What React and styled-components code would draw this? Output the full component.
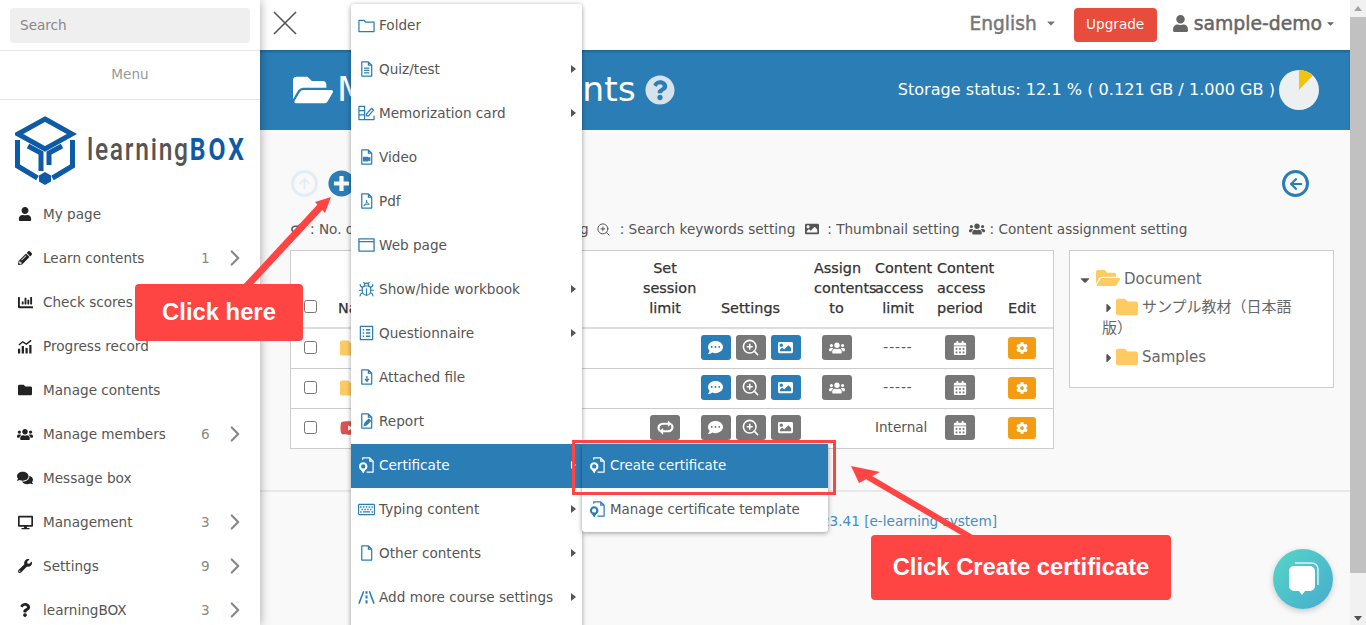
import React from "react";
import styled, { createGlobalStyle } from "styled-components";
import {
  FaUser, FaPencilAlt, FaChartBar, FaFolder, FaUsers, FaComments, FaDesktop, FaWrench, FaQuestion,
  FaFolderOpen, FaQuestionCircle, FaPlusCircle, FaArrowUp, FaArrowLeft, FaCalendarAlt, FaCog,
  FaImage, FaCommentDots, FaRegKeyboard, FaYoutube, FaCaretDown, FaCaretRight,
} from "react-icons/fa";
import { ChevronRight, ZoomIn, Bug } from "lucide-react";

const FONT = `"DejaVu Sans", "Noto Sans CJK JP", sans-serif`;
const BLUE = "#2a7db5";

const GlobalStyle = createGlobalStyle`
  html, body { margin: 0; padding: 0; height: 625px; overflow: hidden; background: #fff; }
  * { box-sizing: border-box; }
  body { font-family: ${FONT}; font-size: 13.6px; color: #555; }
`;

const Page = styled.div`
  position: relative;
  display: flex;
  width: 1366px;
  height: 625px;
  overflow: hidden;
`;

/* ---- sidebar ---- */
const Sidebar = styled.aside`
  width: 260px;
  flex: none;
  background: #fff;
  box-shadow: 0 0 10px rgba(0, 0, 0, 0.35);
  position: relative;
  z-index: 2;
  overflow: hidden;
`;
const SearchWrap = styled.div`
  height: 51px;
  padding: 8px 10px 0;
  border-bottom: 1px solid #e6e6e6;
`;
const SearchBox = styled.div`
  height: 35px;
  background: #efefef;
  border-radius: 4px;
  padding: 0 10px;
  line-height: 34px;
  color: #888;
`;
const MenuTitle = styled.div`
  height: 49px;
  line-height: 46px;
  text-align: center;
  color: #999;
  border-bottom: 1px solid #e6e6e6;
`;
const LogoRow = styled.div`
  display: flex;
  align-items: center;
  height: 92px;
  padding: 9px 0 0 15px;
  svg { flex: none; }
`;
const LogoWord = styled.div`
  margin: -4px 0 0 10px;
  font-family: Roboto, sans-serif;
  font-size: 32px;
  font-weight: 500;
  letter-spacing: 2.2px;
  color: #555;
  white-space: nowrap;
  transform: scaleX(0.77);
  transform-origin: left center;
  span { color: #0d5aa7; font-weight: 700; letter-spacing: 4px; }
`;
const NavItem = styled.div`
  display: flex;
  align-items: center;
  height: 44px;
  padding-left: 17px;
  color: #555;
`;
const NavIcon = styled.span`
  display: flex;
  width: 16px;
  margin-right: 10px;
  justify-content: center;
  color: #222;
`;
const NavBadge = styled.span`
  margin-left: auto;
  width: 21px;
  color: #888;
`;
const NavArrow = styled(ChevronRight)`
  margin-right: 12px;
  color: #888;
`;

/* ---- main column ---- */
const Main = styled.main`
  flex: 1;
  min-width: 0;
  background: #f9f9f9;
`;
const TopBar = styled.header`
  display: flex;
  align-items: center;
  height: 50px;
  padding: 0 14px 4px 14px;
  background: #fff;
`;
const CloseIcon = styled.svg`
  width: 24px;
  height: 24px;
  margin-right: auto;
  margin-left: -1px;
  stroke: #555;
  stroke-width: 1.6;
`;
const Lang = styled.span`
  font-size: 18.6px;
  margin-right: 2px;
  color: #777;
  -webkit-text-stroke: 0.5px #777;
`;
const LangCaret = styled(FaCaretDown)`
  margin-left: 6px;
  color: #777;
`;
const Upgrade = styled.span`
  height: 34px;
  line-height: 33px;
  width: 83px;
  margin: 4px 15px 0 17px;
  text-align: center;
  border-radius: 4px;
  background: #e74c3c;
  color: #fff;
`;
const UserName = styled.span`
  font-size: 18.8px;
  color: #666;
  margin-left: 5px;
  -webkit-text-stroke: 0.5px #666;
`;
const UserCaret = styled(FaCaretDown)`
  margin-left: 3px;
  color: #666;
`;
const Banner = styled.section`
  display: flex;
  align-items: center;
  height: 80px;
  padding: 0 31px 0 33px;
  background: ${BLUE};
  box-shadow: inset 0 2px 2px rgba(0, 0, 0, 0.18);
  color: #fff;
`;
const BannerTitle = styled.h1`
  margin: -2px 9px 0 4px;
  font-size: 34.6px;
  font-weight: 400;
  line-height: 1;
  white-space: nowrap;
`;
const Storage = styled.span`
  margin: -2px 4px 0 auto;
  font-size: 16.1px;
  white-space: nowrap;
`;
const Content = styled.div`
  padding: 40px 16px 0 30px;
`;
const ToolRow = styled.div`
  display: flex;
  align-items: center;
  gap: 10px;
  height: 27px;
  padding: 0 25px 0 1px;
`;
const RingIcon = styled.span`
  display: flex;
  align-items: center;
  justify-content: center;
  width: 27px;
  height: 27px;
  margin-left: ${(p) => (p.$push ? "auto" : "0")};
  border: 3px solid ${(p) => p.$color};
  border-radius: 50%;
  color: ${(p) => p.$color};
`;
const Legend = styled.div`
  display: flex;
  align-items: center;
  height: 20px;
  margin: 22px 0 11px;
  color: #555;
  white-space: nowrap;
`;
const LegendEntry = styled.span`
  display: inline-flex;
  align-items: center;
  gap: ${(p) => p.$gap}px;
  margin-right: ${(p) => p.$after}px;
`;
const Panels = styled.div`
  display: flex;
  align-items: flex-start;
  gap: 15px;
`;
const TableBox = styled.div`
  width: 764px;
  flex: none;
  background: #fff;
  border: 1px solid #ccc;
  border-bottom: 0;
`;
const Row = styled.div`
  display: grid;
  grid-template-columns: 39px 305px 60px 111px 61px 62px 62px 62px;
  height: ${(p) => (p.$head ? "78px" : "40px")};
  border-bottom: ${(p) => (p.$head ? "2px solid #ddd" : "1px solid #ccc")};
`;
const HeadCell = styled.div`
  align-self: end;
  padding: 0 8px 9px;
  text-align: ${(p) => (p.$left ? "left" : "center")};
  font-size: 14.4px;
  line-height: 20px;
  color: #333;
  -webkit-text-stroke: 0.25px #333;
`;
const HeadCheck = styled.div`
  align-self: end;
  display: flex;
  justify-content: center;
  padding-bottom: 14px;
`;
const Cell = styled.div`
  display: flex;
  align-items: center;
  justify-content: ${(p) => (p.$left ? "flex-start" : "center")};
  gap: 5px;
  padding-left: ${(p) => (p.$left ? "10px" : "0")};
  padding-bottom: 2px;
  color: #555;
`;
const LimitText = styled.span`
  width: 46px;
  margin-top: -2px;
  text-align: center;
  white-space: nowrap;
  letter-spacing: ${(p) => (p.$dash ? "1px" : "0")};
`;
const CheckBox = styled.span`
  width: 13px;
  height: 13px;
  border: 1px solid #767676;
  border-radius: 2.5px;
  background: #fff;
`;
const ActionBtn = styled.span`
  display: flex;
  align-items: center;
  justify-content: center;
  width: ${(p) => (p.$edit ? "28px" : "30px")};
  height: ${(p) => (p.$edit ? "22px" : "25px")};
  margin-top: ${(p) => (p.$edit ? "1px" : "0")};
  border-radius: 3px;
  color: #fff;
  background: ${(p) => (p.$edit ? "#f39c12" : p.$blue ? BLUE : "#777")};
`;
const TreeBox = styled.div`
  width: 265px;
  flex: none;
  padding: 15px 30px 19px 8px;
  background: #fff;
  border: 1px solid #ccc;
  font-size: 15px;
  color: #666;
`;
const TreeRow = styled.div`
  line-height: 20px;
  margin-left: ${(p) => (p.$nested ? "24px" : "0")};
  margin-top: ${(p) => p.$gap || 0}px;
  svg { vertical-align: -3px; margin-right: 4px; }
  svg:first-child { margin-right: ${(p) => (p.$nested ? "0" : "4px")}; }
  svg:nth-child(2) { vertical-align: -6px; }
`;
const Footer = styled.footer`
  display: flex;
  justify-content: flex-end;
  margin-top: 41px;
  padding: 21px 353px 0 0;
  border-top: 2px solid #e8e8e8;
  color: #3f8fc6;
  line-height: 16px;
`;
const Scrollbar = styled.div`
  width: 16px;
  flex: none;
  background: #f1f1f1;
  display: flex;
  flex-direction: column;
  align-items: center;
`;
const ScrollTop = styled.div`
  height: 17px;
  display: flex;
  align-items: center;
`;
const ScrollThumb = styled.div`
  width: 16px;
  height: 556px;
  margin-bottom: auto;
  background: #c1c1c1;
`;
const ScrollArrow = styled.span`
  width: 0;
  height: 0;
  margin-bottom: ${(p) => (p.$up ? "0" : "4px")};
  border-left: 4px solid transparent;
  border-right: 4px solid transparent;
  border-top: ${(p) => (p.$up ? "0" : "5px solid #505050")};
  border-bottom: ${(p) => (p.$up ? "5px solid #a3a3a3" : "0")};
`;

/* ---- things lying over the page ---- */
const Dropdown = styled.div`
  position: absolute;
  left: ${(p) => p.$left}px;
  top: ${(p) => p.$top}px;
  width: ${(p) => p.$width}px;
  font-size: ${(p) => p.$size || 13.6}px;
  background: #fff;
  border-radius: 3px;
  box-shadow: 0 1px 5px rgba(0, 0, 0, 0.4);
  z-index: 3;
`;
const DropItem = styled.div`
  display: flex;
  align-items: center;
  gap: 4px;
  height: 44px;
  padding: 0 7px 2px;
  white-space: nowrap;
  background: ${(p) => (p.$active ? BLUE : "transparent")};
  color: ${(p) => (p.$active ? "#fff" : "#555")};
  svg { flex: none; color: ${(p) => (p.$active ? "#fff" : BLUE)}; }
`;
const DropCaret = styled.span`
  margin-left: auto;
  margin-right: -1px;
  border-left: 5px solid ${(p) => (p.$active ? "#fff" : "#555")};
  border-top: 4px solid transparent;
  border-bottom: 4px solid transparent;
`;
const Highlight = styled.div`
  position: absolute;
  left: 572px;
  top: 440px;
  width: 264px;
  height: 55px;
  border: 3px solid #f44;
  z-index: 4;
`;
const ArrowLayer = styled.svg`
  position: absolute;
  left: 0;
  top: 0;
  z-index: 4;
  pointer-events: none;
`;
const Callout = styled.div`
  position: absolute;
  left: ${(p) => p.$left}px;
  top: ${(p) => p.$top}px;
  width: ${(p) => p.$width}px;
  height: ${(p) => p.$height}px;
  display: flex;
  align-items: center;
  justify-content: center;
  padding-bottom: 1px;
  border-radius: 4px;
  background: #f44;
  color: #fff;
  font-family: "Liberation Sans", Arial, sans-serif;
  font-weight: 700;
  font-size: 23.8px;
  z-index: 5;
`;
const ChatBubble = styled.div`
  position: absolute;
  left: 1273px;
  top: 549px;
  width: 60px;
  height: 60px;
  display: flex;
  align-items: center;
  justify-content: center;
  border-radius: 50%;
  background: linear-gradient(135deg, #56d6c6, #47abcf);
  box-shadow: 0 2px 6px rgba(0, 0, 0, 0.2);
  z-index: 5;
`;

/* ---- drawn icons ---- */
const MI = ({ children, w = 17 }) => (
  <svg width={w} height={18} viewBox="0 0 18 18" fill="none" stroke="currentColor" strokeWidth="1.3" strokeLinejoin="round">
    {children}
  </svg>
);
const FILE = "M4 1.5h7l3.5 3.5v11.5h-10.5z M11 1.5v3.5h3.5";
const IconFolder = () => <MI><path d="M1 4h5.5l1.5 2h9v10h-16z" /></MI>;
const IconQuiz = () => <MI><path d={FILE} /><path d="M6.5 8h5.5M6.5 10.5h5.5M6.5 13h5.5" /></MI>;
const IconCard = () => (
  <MI>
    <path d="M1 2h6v14h-6zM1 6.5h6M1 11h6M7 16h10v-4" />
    <path d="M9 10l5.5-6 2 2-5.5 6h-2z" />
  </MI>
);
const IconVideo = () => <MI><path d={FILE} /><path d="M6 9.5h4.5v3.5h-4.5zM10.5 11l2-1.2v3l-2-1.2z" fill="currentColor" /></MI>;
const IconPdf = () => <MI><path d={FILE} /><path d="M6 14c2-1 3.5-3.5 3-6 .3 2.5 1.3 4 3 4.5-2-.2-4 .3-6 1.5z" strokeWidth="1" /></MI>;
const IconWeb = () => <MI><path d="M1 2.5h16v13h-16zM1 5.5h16" strokeWidth="1.4" /></MI>;
const IconForm = () => (
  <MI>
    <path d="M2.5 2h13v14h-13z" />
    <path d="M5 5.5h1.5M5 9h1.5M5 12.5h1.5M8.5 5.5h4.5M8.5 9h4.5M8.5 12.5h4.5" strokeWidth="1.6" />
  </MI>
);
const IconAttach = () => <MI><path d={FILE} /><path d="M9.5 8v5M7.5 11l2 2.5 2-2.5" /></MI>;
const IconReport = () => <MI><path d={FILE} /><path d="M6.5 14l1-3 4-4 1.8 1.8-4 4z" fill="currentColor" /></MI>;
const IconCert = () => (
  <MI>
    <path d="M5 3.5v-2h7.5l3.5 3.5v11.5h-7M12.5 1.5v3.5h3.5" />
    <circle cx="5.5" cy="10.5" r="3.4" strokeWidth="2.2" />
    <path d="M4 14l1.5 3 1.5-3" fill="currentColor" />
  </MI>
);
const IconOther = () => <MI><path d={FILE} /></MI>;
const IconRoad = () => (
  <MI>
    <path d="M6 3L1 16M12 3l5 13" strokeWidth="1.6" />
    <path d="M9 3v2.5M9 7.5v3M9 12.5v3.5" strokeWidth="2.2" />
  </MI>
);
const IconProgress = () => (
  <svg width="17" height="15" viewBox="0 0 17 15" fill="#222">
    <path d="M1 10h2.4v5h-2.4zM5 7h2.4v8h-2.4zM9 9h2.4v6h-2.4zM13 6h2.4v9h-2.4z" />
    <path d="M2 6l4-3.5 4 2.5 5-4" fill="none" stroke="#222" strokeWidth="1.5" />
  </svg>
);
const IconSession = ({ size = 19 }) => (
  <svg width={size} height={size} viewBox="0 0 20 20" fill="none" stroke="currentColor" strokeWidth="2.2">
    <path d="M4 13.5c-3-3.5-.5-7.5 3.5-7.5h7" />
    <path d="M16 6.5c3 3.5.5 7.5-3.5 7.5h-7" />
    <path d="M12.5 2.5l4 3.5-4 3.5z" fill="currentColor" stroke="none" />
    <path d="M7.5 10.5l-4 3.5 4 3.5z" fill="currentColor" stroke="none" />
  </svg>
);

const NAV = [
  { label: "My page", icon: <FaUser size={14} /> },
  { label: "Learn contents", icon: <FaPencilAlt size={14} />, badge: 1 },
  { label: "Check scores", icon: <FaChartBar size={15} /> },
  { label: "Progress record", icon: <IconProgress /> },
  { label: "Manage contents", icon: <FaFolder size={14} /> },
  { label: "Manage members", icon: <FaUsers size={17} />, badge: 6 },
  { label: "Message box", icon: <FaComments size={16} /> },
  { label: "Management", icon: <FaDesktop size={15} />, badge: 3 },
  { label: "Settings", icon: <FaWrench size={14} />, badge: 9 },
  { label: "learningBOX", icon: <FaQuestion size={14} />, badge: 3 },
];

const MENU = [
  { label: "Folder", icon: <IconFolder /> },
  { label: "Quiz/test", icon: <IconQuiz />, more: true },
  { label: "Memorization card", icon: <IconCard />, more: true },
  { label: "Video", icon: <IconVideo /> },
  { label: "Pdf", icon: <IconPdf /> },
  { label: "Web page", icon: <IconWeb /> },
  { label: "Show/hide workbook", icon: <Bug size={17} strokeWidth={1.6} />, more: true },
  { label: "Questionnaire", icon: <IconForm />, more: true },
  { label: "Attached file", icon: <IconAttach /> },
  { label: "Report", icon: <IconReport /> },
  { label: "Certificate", icon: <IconCert />, more: true, active: true },
  { label: "Typing content", icon: <FaRegKeyboard size={17} />, more: true },
  { label: "Other contents", icon: <IconOther />, more: true },
  { label: "Add more course settings", icon: <IconRoad />, more: true },
];

const Pie = () => (
  <svg width="40" height="40" viewBox="0 0 40 40">
    <circle cx="20" cy="20" r="20" fill="#ecf0f1" />
    <path d="M20 20V0A20 20 0 0 1 33.9 5.6z" fill="#f1c40f" />
  </svg>
);

const Logo = () => (
  <svg width="62" height="70" viewBox="0 0 62 70" fill="none" stroke="#0d5aa7" strokeWidth="5">
    <path d="M30 3L57 18 30 33 3 18z" />
    <path d="M2.5 24v26l20 12M57.5 24v26l-20 12" />
    <path d="M13 30l13 7v18M47 30l-13 7v12" />
    <path d="M30 56l6 3.5v6L30 69l-6-3.5v-6z" fill="#0d5aa7" stroke="none" />
  </svg>
);

const Actions = ({ blue }) => (
  <>
    <ActionBtn $blue={blue}><FaCommentDots size={15} /></ActionBtn>
    <ActionBtn><ZoomIn size={19} strokeWidth={2} /></ActionBtn>
    <ActionBtn $blue={blue}><FaImage size={15} /></ActionBtn>
  </>
);

const TableRow = ({ nameIcon, session, blue, assign, limit, dash }) => (
  <Row>
    <Cell><CheckBox /></Cell>
    <Cell $left>{nameIcon}</Cell>
    <Cell>{session && <ActionBtn><IconSession /></ActionBtn>}</Cell>
    <Cell><Actions blue={blue} /></Cell>
    <Cell>{assign && <ActionBtn><FaUsers size={16} /></ActionBtn>}</Cell>
    <Cell><LimitText $dash={dash}>{limit}</LimitText></Cell>
    <Cell><ActionBtn><FaCalendarAlt size={14} /></ActionBtn></Cell>
    <Cell><ActionBtn $edit><FaCog size={12} /></ActionBtn></Cell>
  </Row>
);

export default function App() {
  return (
    <Page>
      <GlobalStyle />
      <Sidebar>
        <SearchWrap><SearchBox>Search</SearchBox></SearchWrap>
        <MenuTitle>Menu</MenuTitle>
        <LogoRow>
          <Logo />
          <LogoWord>learning<span>BOX</span></LogoWord>
        </LogoRow>
        {NAV.map((n) => (
          <NavItem key={n.label}>
            <NavIcon>{n.icon}</NavIcon>
            {n.label}
            {n.badge && <NavBadge>{n.badge}</NavBadge>}
            {n.badge && <NavArrow size={26} strokeWidth={2} />}
          </NavItem>
        ))}
      </Sidebar>

      <Main>
        <TopBar>
          <CloseIcon viewBox="0 0 24 24"><path d="M1 1l22 22M23 1L1 23" /></CloseIcon>
          <Lang>English</Lang>
          <LangCaret size={12} />
          <Upgrade>Upgrade</Upgrade>
          <FaUser size={17} color="#666" />
          <UserName>sample-demo</UserName>
          <UserCaret size={11} />
        </TopBar>
        <Banner>
          <FaFolderOpen size={40} />
          <BannerTitle>Manage contents</BannerTitle>
          <FaQuestionCircle size={30} color="#d8e2ea" />
          <Storage>Storage status: 12.1 % ( 0.121 GB / 1.000 GB )</Storage>
          <Pie />
        </Banner>
        <Content>
          <ToolRow>
            <RingIcon $color="#e3edf4"><FaArrowUp size={13} /></RingIcon>
            <FaPlusCircle size={27} color={BLUE} />
            <RingIcon $color={BLUE} $push><FaArrowLeft size={14} /></RingIcon>
          </ToolRow>
          <Legend>
            <LegendEntry $gap={6} $after={7}><IconSession size={14} /> : No. of sessions limits, Comment setting</LegendEntry>
            <LegendEntry $gap={9} $after={10}><ZoomIn size={15} strokeWidth={1.6} /> : Search keywords setting</LegendEntry>
            <LegendEntry $gap={8} $after={9}><FaImage size={14} /> : Thumbnail setting</LegendEntry>
            <LegendEntry $gap={5} $after={0}><FaUsers size={16} /> : Content assignment setting</LegendEntry>
          </Legend>
          <Panels>
            <TableBox>
              <Row $head>
                <HeadCheck><CheckBox /></HeadCheck>
                <HeadCell $left>Name</HeadCell>
                <HeadCell>Set<br />session<br />limit</HeadCell>
                <HeadCell>Settings</HeadCell>
                <HeadCell>Assign<br />contents<br />to</HeadCell>
                <HeadCell>Content<br />access<br />limit</HeadCell>
                <HeadCell>Content<br />access<br />period</HeadCell>
                <HeadCell>Edit</HeadCell>
              </Row>
              <TableRow nameIcon={<FaFolder size={20} color="#fecb63" />} blue assign limit="-----" dash />
              <TableRow nameIcon={<FaFolder size={20} color="#fecb63" />} blue assign limit="-----" dash />
              <TableRow nameIcon={<FaYoutube size={20} color="#d9534f" />} session limit="Internal" />
            </TableBox>
            <TreeBox>
              <TreeRow>
                <FaCaretDown size={14} color="#555" />
                <FaFolderOpen size={24} color="#fecb63" />Document
              </TreeRow>
              <TreeRow $nested $gap={6}>
                <FaCaretRight size={14} color="#555" />
                <FaFolder size={22} color="#fecb63" />サンプル教材（日本語版）
              </TreeRow>
              <TreeRow $nested $gap={8}>
                <FaCaretRight size={14} color="#555" />
                <FaFolder size={22} color="#fecb63" />Samples
              </TreeRow>
            </TreeBox>
          </Panels>
        </Content>
        <Footer>learningBOX Version 2.23.41 [e-learning system]</Footer>
      </Main>

      <Scrollbar>
        <ScrollTop><ScrollArrow $up /></ScrollTop>
        <ScrollThumb />
        <ScrollArrow />
      </Scrollbar>

      <Dropdown $left={351} $top={4} $width={231}>
        {MENU.map((m) => (
          <DropItem key={m.label} $active={m.active}>
            {m.icon}
            {m.label}
            {m.more && <DropCaret $active={m.active} />}
          </DropItem>
        ))}
        <DropItem />
      </Dropdown>
      <Dropdown $left={582} $top={444} $width={246} $size={13.4}>
        <DropItem $active><IconCert />Create certificate</DropItem>
        <DropItem><IconCert />Manage certificate template</DropItem>
      </Dropdown>

      <Highlight />
      <ArrowLayer width="1366" height="625">
        <path d="M245 288L322 205" stroke="#f44" strokeWidth="7" />
        <path d="M331 197L315 202L325 213z" fill="#f44" />
        <path d="M972 538L868 477" stroke="#f44" strokeWidth="6" />
        <path d="M851 466L859 483L880 472z" fill="#f44" />
      </ArrowLayer>
      <Callout $left={135} $top={284} $width={168} $height={57}>Click here</Callout>
      <Callout $left={871} $top={535} $width={300} $height={65}>Click Create certificate</Callout>
      <ChatBubble>
        <svg width="34" height="36" viewBox="0 0 34 36">
          <path d="M9 2h17a6 6 0 0 1 6 6v16" fill="none" stroke="#fff" strokeWidth="1.5" opacity="0.8" />
          <path d="M8 5h16a5 5 0 0 1 5 5v15a5 5 0 0 1-5 5h-5l-3 4-3-4h-5a5 5 0 0 1-5-5v-15a5 5 0 0 1 5-5z" fill="#fff" />
        </svg>
      </ChatBubble>
    </Page>
  );
}
